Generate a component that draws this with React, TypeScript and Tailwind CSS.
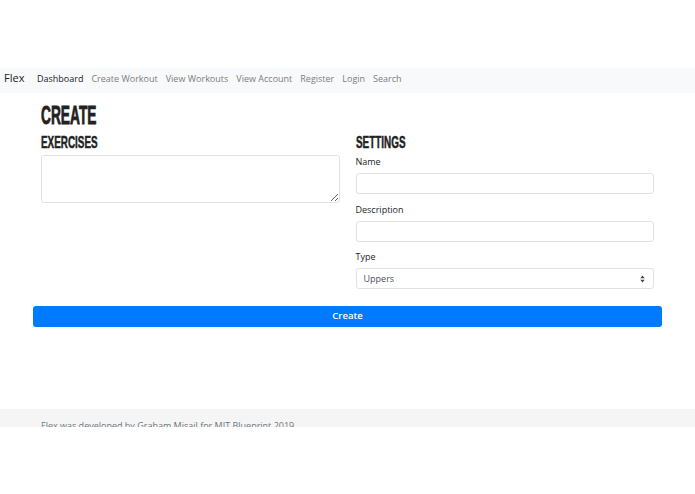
import React from "react";

const navLinks = [
  "Create Workout",
  "View Workouts",
  "View Account",
  "Register",
  "Login",
  "Search",
];

const headFont = {
  fontFamily: '"Liberation Sans", Arial, sans-serif',
};

export default function App() {
  return (
    <div
      className="w-[695px] h-[494px] bg-white overflow-hidden text-[#212529]"
      style={{ fontFamily: '"Open Sans", "Liberation Sans", sans-serif' }}
    >
      <div className="h-[68px]" />

      {/* Navbar */}
      <nav className="h-[25px] bg-[#f8f9fa] flex items-center pl-[4px] pb-[4px]">
        <span className="text-[11px] text-[#222] w-[33px]">Flex</span>
        <div className="flex items-center gap-[8px] text-[9px]">
          <span className="text-[#222]">Dashboard</span>
          {navLinks.map((l) => (
            <span key={l} className="text-[#7d7d7d]">
              {l}
            </span>
          ))}
        </div>
      </nav>

      {/* Content */}
      <div className="h-[316px] px-[33px]">
        <div className="px-[8px] pt-[10px]">
          <h1
            className="text-[25px] leading-[25px] font-bold text-[#222] scale-x-[0.55] origin-left whitespace-nowrap [-webkit-text-stroke:0.8px_#222]"
            style={headFont}
          >
            CREATE
          </h1>
        </div>
        <div className="flex mt-[5px]">
          <div className="w-1/2 px-[8px]">
            <h2
              className="text-[16.5px] leading-[18px] font-bold text-[#222] scale-x-[0.6] origin-left whitespace-nowrap [-webkit-text-stroke:0.5px_#222]"
              style={headFont}
            >
              EXERCISES
            </h2>
            <textarea className="mt-[4px] block w-full h-[48px] border border-[#dfe2e6] rounded-[3px] resize-y" />
          </div>
          <div className="w-1/2 px-[8px]">
            <h2
              className="text-[16.5px] leading-[18px] font-bold text-[#222] scale-x-[0.6] origin-left whitespace-nowrap [-webkit-text-stroke:0.5px_#222]"
              style={headFont}
            >
              SETTINGS
            </h2>
            <label className="block text-[9px] leading-[12px] mt-[5px]">Name</label>
            <input className="mt-[5px] block w-full h-[21px] border border-[#dfe2e6] rounded-[3px]" />
            <label className="block text-[9px] leading-[12px] mt-[10px]">Description</label>
            <input className="mt-[5px] block w-full h-[21px] border border-[#dfe2e6] rounded-[3px]" />
            <label className="block text-[9px] leading-[12px] mt-[9px]">Type</label>
            <div className="mt-[5px] h-[21px] border border-[#dfe2e6] rounded-[3px] flex items-center justify-between pl-[7px] pr-[8px] text-[9px] text-[#495057]">
              <span>Uppers</span>
              <svg width="5" height="8" viewBox="0 0 5 8">
                <path d="M2.5 0.5 L4.7 3.3 H0.3 Z" fill="#444" />
                <path d="M2.5 7.5 L4.7 4.7 H0.3 Z" fill="#444" />
              </svg>
            </div>
          </div>
        </div>
        <button className="mt-[17px] w-full h-[21px] bg-[#007bff] rounded-[3px] text-white text-[9.5px] font-semibold flex items-center justify-center">
          Create
        </button>
      </div>

      {/* Footer */}
      <div className="h-[18px] bg-[#f5f5f5] overflow-hidden px-[41px]">
        <p className="text-[9px] leading-[12px] pt-[11px] text-[#6c757d] whitespace-nowrap">
          Flex was developed by Graham Misail for MIT Blueprint 2019
        </p>
      </div>
    </div>
  );
}
